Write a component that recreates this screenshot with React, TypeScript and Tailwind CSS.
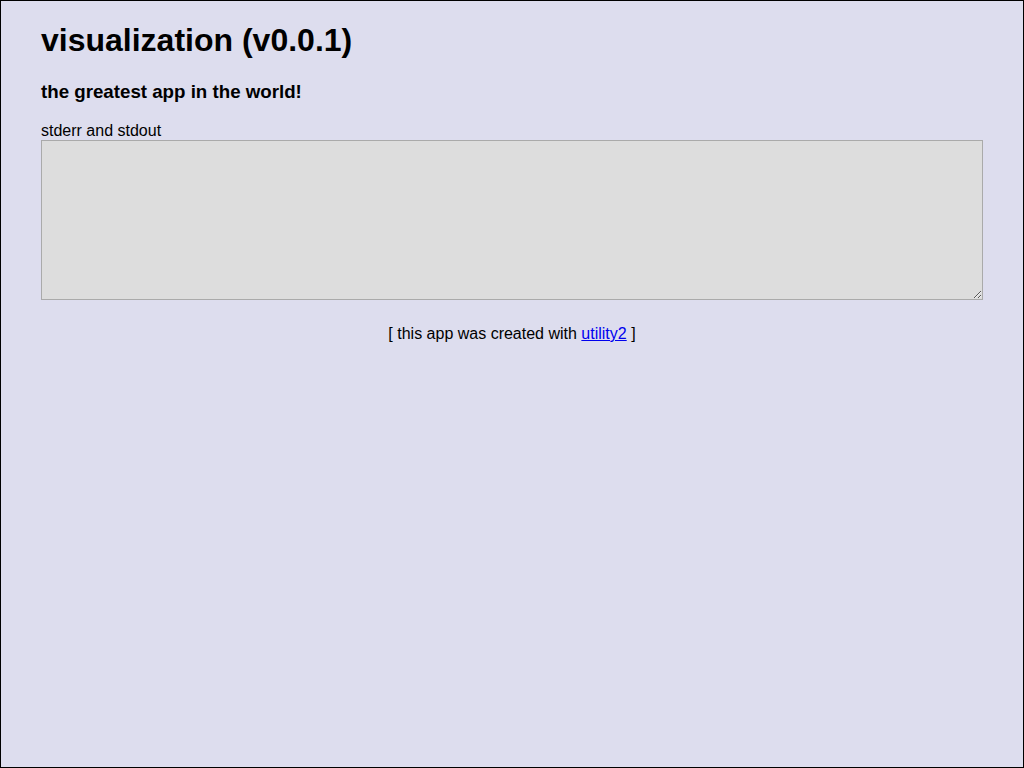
export default function App() {
  return (
    <div
      className="box-border flex h-[768px] w-full flex-col border border-black bg-[#dde] px-10 text-black"
      style={{ fontFamily: '"Liberation Sans", Arial, sans-serif' }}
    >
      <h1 className="mt-[21px] text-[32px] font-bold leading-[37px]">visualization (v0.0.1)</h1>
      <h3 className="mt-[22px] text-[18.72px] font-bold leading-[22px]">the greatest app in the world!</h3>
      <label className="mt-[19px] text-base leading-[18px]">stderr and stdout</label>
      <textarea
        readOnly
        className="box-border h-[160px] w-full resize border border-[#aaa] bg-[#ddd] outline-none"
      />
      <div className="mt-[25px] text-center text-base leading-[18px]">
        [ this app was created with{' '}
        <a href="#" className="text-[#00e] underline">
          utility2
        </a>{' '}
        ]
      </div>
    </div>
  )
}
